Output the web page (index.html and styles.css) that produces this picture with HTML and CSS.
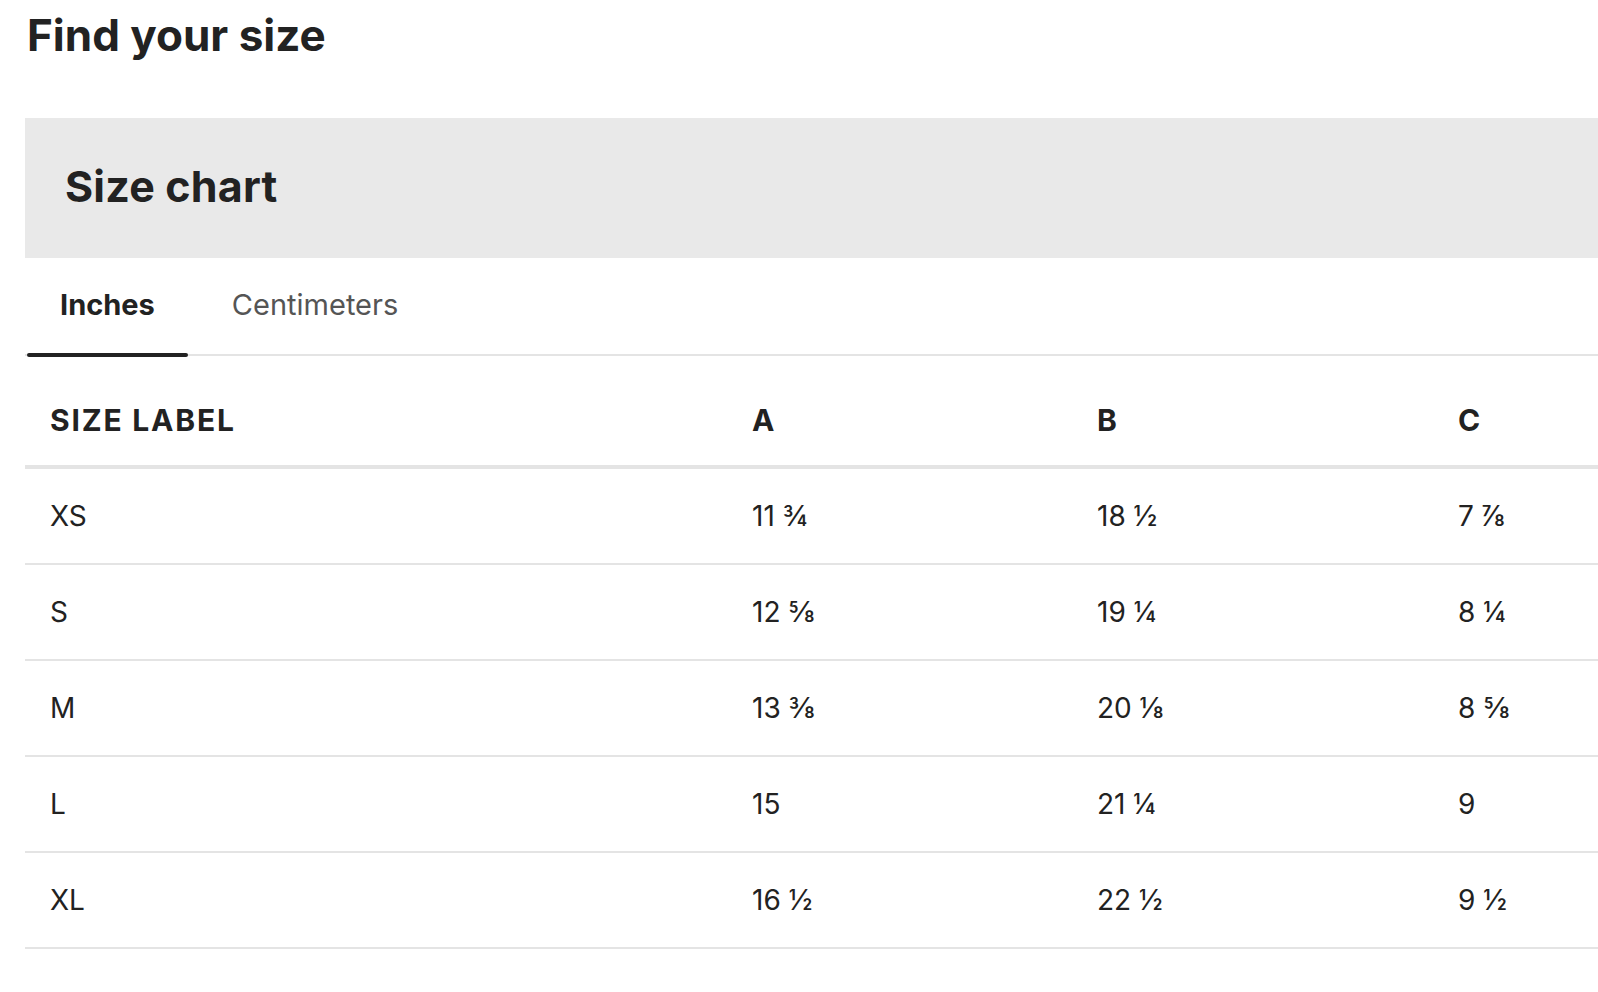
FILE: index.html
```html
<!DOCTYPE html>
<html lang="en">
<head>
<meta charset="utf-8">
<title>Find your size</title>
<link rel="stylesheet" href="styles.css">
</head>
<body>
<main class="page">
  <h1 class="page-title">Find your size</h1>
  <section class="chart">
    <div class="chart-head">
      <h2 class="chart-title">Size chart</h2>
    </div>
    <div class="tabs">
      <div class="tab tab-active">Inches</div>
      <div class="tab">Centimeters</div>
    </div>
    <div class="table">
      <div class="row row-head">
        <div class="cell">SIZE LABEL</div>
        <div class="cell">A</div>
        <div class="cell">B</div>
        <div class="cell">C</div>
      </div>
      <div class="row">
        <div class="cell">XS</div>
        <div class="cell">11 ¾</div>
        <div class="cell">18 ½</div>
        <div class="cell">7 ⅞</div>
      </div>
      <div class="row">
        <div class="cell">S</div>
        <div class="cell">12 ⅝</div>
        <div class="cell">19 ¼</div>
        <div class="cell">8 ¼</div>
      </div>
      <div class="row">
        <div class="cell">M</div>
        <div class="cell">13 ⅜</div>
        <div class="cell">20 ⅛</div>
        <div class="cell">8 ⅝</div>
      </div>
      <div class="row">
        <div class="cell">L</div>
        <div class="cell">15</div>
        <div class="cell">21 ¼</div>
        <div class="cell">9</div>
      </div>
      <div class="row">
        <div class="cell">XL</div>
        <div class="cell">16 ½</div>
        <div class="cell">22 ½</div>
        <div class="cell">9 ½</div>
      </div>
    </div>
  </section>
</main>
</body>
</html>
```
FILE: styles.css
```css
html, body {
  margin: 0;
  padding: 0;
  background: #ffffff;
  overflow: hidden;
}
body {
  font-family: Inter, Lato, "Liberation Sans", sans-serif;
  color: #222222;
}
.page {
  padding-left: 25px;
  width: 1700px;
}
.page-title {
  margin: 0;
  font-size: 44px;
  font-weight: 700;
  line-height: 70px;
  padding-left: 2px;
  height: 70px;
}
.chart {
  margin-top: 48px;
}
.chart-head {
  background: #e9e9e9;
  height: 140px;
  display: flex;
  align-items: center;
  padding-left: 40px;
}
.chart-title {
  margin: 0;
  font-size: 43px;
  font-weight: 700;
  line-height: 1;
  padding-bottom: 4px;
  letter-spacing: 0.2px;
}
.tabs {
  display: flex;
  gap: 11px;
  padding-left: 2px;
  border-bottom: 2px solid #e4e4e4;
  height: 96px;
}
.tab {
  font-size: 29px;
  padding: 0 33px 3px;
  display: flex;
  align-items: center;
  color: #555555;
  position: relative;
}
.tab-active {
  font-weight: 700;
  color: #222222;
}
.tab-active::after {
  content: "";
  position: absolute;
  left: 0;
  right: 0;
  bottom: -3px;
  height: 4px;
  border-radius: 2px;
  background: #222222;
}
.table {
  display: flex;
  flex-direction: column;
}
.row {
  display: grid;
  grid-template-columns: 702px 345px 361px 1fr;
  height: 94px;
  border-bottom: 2px solid #e4e4e4;
  align-items: center;
  font-size: 28px;
}
.row-head {
  height: 113px;
  padding-top: 18px;
  box-sizing: border-box;
  border-bottom: 4px solid #e4e4e4;
  font-weight: 700;
  font-size: 30px;
  letter-spacing: 1.8px;
}
.cell {
  padding-left: 25px;
}
```
